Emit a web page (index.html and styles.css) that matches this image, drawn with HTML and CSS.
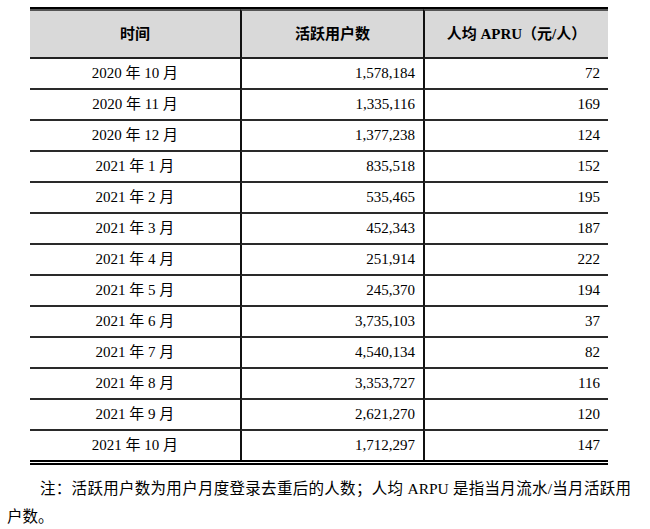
FILE: index.html
```html
<!DOCTYPE html>
<html lang="zh-CN">
<head>
<meta charset="utf-8">
<link rel="stylesheet" href="styles.css">
</head>
<body>
<div class="page">
  <table class="data">
    <colgroup>
      <col class="c1"><col class="c2"><col class="c3">
    </colgroup>
    <thead>
      <tr><th>时间</th><th>活跃用户数</th><th>人均 APRU（元/人）</th></tr>
    </thead>
    <tbody>
      <tr><td>2020 年 10 月</td><td>1,578,184</td><td>72</td></tr>
      <tr><td>2020 年 11 月</td><td>1,335,116</td><td>169</td></tr>
      <tr><td>2020 年 12 月</td><td>1,377,238</td><td>124</td></tr>
      <tr><td>2021 年 1 月</td><td>835,518</td><td>152</td></tr>
      <tr><td>2021 年 2 月</td><td>535,465</td><td>195</td></tr>
      <tr><td>2021 年 3 月</td><td>452,343</td><td>187</td></tr>
      <tr><td>2021 年 4 月</td><td>251,914</td><td>222</td></tr>
      <tr><td>2021 年 5 月</td><td>245,370</td><td>194</td></tr>
      <tr><td>2021 年 6 月</td><td>3,735,103</td><td>37</td></tr>
      <tr><td>2021 年 7 月</td><td>4,540,134</td><td>82</td></tr>
      <tr><td>2021 年 8 月</td><td>3,353,727</td><td>116</td></tr>
      <tr><td>2021 年 9 月</td><td>2,621,270</td><td>120</td></tr>
      <tr><td>2021 年 10 月</td><td>1,712,297</td><td>147</td></tr>
    </tbody>
  </table>
  <p class="note">注：活跃用户数为用户月度登录去重后的人数；人均 ARPU 是指当月流水/当月活跃用户数。</p>
</div>
</body>
</html>
```

FILE: styles.css
```css
html, body {
  margin: 0;
  padding: 0;
  background: #fff;
}
body {
  font-family: "Liberation Serif", "Noto Sans CJK SC", serif;
  color: #000;
}
.page {
  padding: 7px 0 0 7px;
}
.data {
  margin-left: 23px;
  width: 578px;
  table-layout: fixed;
  border-collapse: separate;
  border-spacing: 0;
  border-top: 2px solid #000;
  border-bottom: 5px double #000;
  font-size: 15px;
}
.c1 { width: 210px; }
.c2 { width: 183px; }
.c3 { width: 185px; }
.data th {
  background: #d9d9d9;
  height: 46px;
  padding: 0;
  border-top: 2px solid #555;
  border-bottom: 2px solid #222;
  font-weight: bold;
  text-align: center;
  vertical-align: middle;
  line-height: 46px;
}
.data td {
  height: 29px;
  padding: 0 8px 0 0;
  line-height: 29px;
  border-bottom: 2px solid #2a2a2a;
  text-align: right;
  white-space: nowrap;
}
.data td:first-child {
  text-align: center;
  padding: 0;
}
.data th + th,
.data td + td {
  border-left: 2px solid #111;
}
.data tbody tr:last-child td {
  border-bottom: none;
}
.note {
  margin: 10px 0 0;
  width: 624px;
  font-size: 15.5px;
  line-height: 28px;
  text-indent: 33px;
  text-align: justify;
}
```
